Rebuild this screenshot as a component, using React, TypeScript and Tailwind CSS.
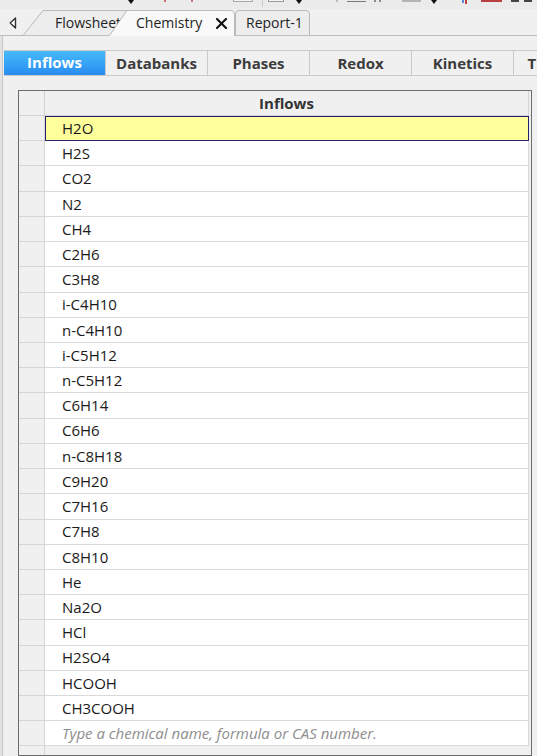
import React from "react";

const items = [
  "H2O","H2S","CO2","N2","CH4","C2H6","C3H8","i-C4H10","n-C4H10","i-C5H12","n-C5H12","C6H14","C6H6","n-C8H18","C9H20","C7H16","C7H8","C8H10","He","Na2O","HCl","H2SO4","HCOOH","CH3COOH",
];

const subTabs = ["Inflows", "Databanks", "Phases", "Redox", "Kinetics", "Transport"];

function Tri({ ml }: { ml: string }) {
  return (
    <svg className={`${ml} shrink-0`} width="6" height="4" viewBox="0 0 6 4">
      <polygon points="0,0 6,0 3,4" fill="#111" />
    </svg>
  );
}

export default function App() {
  return (
    <div
      className="w-[537px] h-[756px] overflow-hidden bg-[#f0f0f0] flex flex-col"
      style={{ fontFamily: "'Segoe UI', 'Open Sans', 'Noto Sans', sans-serif" }}
    >
      {/* toolbar remnants */}
      <div className="h-[9px] shrink-0 bg-[#ebebeb] flex items-start">
        <Tri ml="ml-[128px]" />
        <div className="ml-[30px] w-[2px] h-[2px] bg-[#d07070]" />
        <div className="ml-[25px] w-[2px] h-[2px] bg-[#d07070]" />
        <div className="ml-[40px] w-[20px] h-[2px] border border-t-0 border-[#a8a8a8] bg-[#f4f4f4]" />
        <div className="ml-[9px] w-px h-[7px] bg-[#cacaca]" />
        <div className="ml-[5px] w-[16px] h-[2px] border border-t-0 border-[#9a9a9a] bg-[#f4f4f4]" />
        <Tri ml="ml-[12px]" />
        <div className="ml-[34px] w-[2px] h-[2px] bg-[#bdbdbd]" />
        <div className="ml-[9px] w-[19px] h-px mt-px bg-[#7a7a7a]" />
        <div className="ml-[8px] w-[2px] h-[2px] bg-[#8a8a8a]" />
        <div className="ml-[3px] w-[2px] h-[2px] bg-[#8a8a8a]" />
        <div className="ml-[21px] w-[19px] h-[2px] bg-[#b4b4b4]" />
        <Tri ml="ml-[10px]" />
        <div className="ml-[25px] w-[2px] h-[3px] bg-[#5a85d8]" />
        <div className="ml-px w-[2px] h-[4px] bg-[#c04040]" />
        <div className="ml-[14px] w-[21px] h-[2px] bg-[#b84040]" />
        <div className="ml-[9px] w-[8px] h-[2px] bg-[#444]" />
        <div className="ml-[5px] w-[8px] h-[2px] bg-[#444]" />
      </div>

      {/* document tabs */}
      <div className="h-[27px] shrink-0 flex items-end border-b border-[#bdbdbd] bg-[#f0f0f0]">
        <div className="w-[23px] h-[26px] flex items-center justify-center pl-[3px] pt-px">
          <svg width="8" height="12" viewBox="0 0 8 12">
            <polygon points="6.5,1 1.2,6 6.5,11" fill="#fff" stroke="#333" strokeWidth="1.4" strokeLinejoin="round" />
          </svg>
        </div>
        <div className="relative w-[105px] h-[25px] -mr-[19px] shrink-0">
          <svg className="absolute inset-0" width="105" height="25" viewBox="0 0 105 25">
            <path d="M0.5,25 L20,0.5 L104.5,0.5 L104.5,25" fill="#ededed" stroke="#b9b9b9" />
          </svg>
          <div className="relative pl-[32px] pt-[4px] text-[14px] text-[#1e1e1e] leading-[18px]">Flowsheet</div>
        </div>
        <div className="relative z-10 w-[126px] h-[26px] -mb-px shrink-0">
          <svg className="absolute inset-0" width="126" height="26" viewBox="0 0 126 26">
            <path d="M0,26 L0.5,25.5 L18,0.5 L122,0.5 Q125.5,0.5 125.5,4 L125.5,26" fill="#f9f9f9" stroke="#b9b9b9" />
          </svg>
          <div className="relative flex items-center pl-[27px] pt-[4px] text-[14px] text-[#1e1e1e] leading-[18px]">
            <span>Chemistry</span>
            <svg className="ml-[14px] mt-px" width="11" height="11" viewBox="0 0 11 11">
              <path d="M1,1 L10,10 M10,1 L1,10" stroke="#111" strokeWidth="2.1" strokeLinecap="square" />
            </svg>
          </div>
        </div>
        <div className="relative w-[75px] h-[25px] shrink-0">
          <svg className="absolute inset-0" width="75" height="25" viewBox="0 0 75 25">
            <path d="M0.5,25 L0.5,4 Q0.5,0.5 4,0.5 L71,0.5 Q74.5,0.5 74.5,4 L74.5,25" fill="#ededed" stroke="#b9b9b9" />
          </svg>
          <div className="relative pl-[11px] pt-[4px] text-[14px] text-[#1e1e1e] leading-[18px]">Report-1</div>
        </div>
      </div>

      {/* panel */}
      <div className="flex-1 flex bg-[#e2e2e2] pl-[2px] min-h-0">
        <div className="flex-1 flex flex-col border-l border-[#c6c6c6] bg-[#f0f0f0] min-h-0 overflow-hidden">
          <div className="mt-[14px] ml-[1px] h-[26px] shrink-0 flex border-t border-b border-[#c9c9c9] overflow-hidden">
            {subTabs.map((t, i) => (
              <div
                key={t}
                className={
                  i === 0
                    ? "w-[102px] shrink-0 flex items-center justify-center border-r border-[#c9c9c9] bg-gradient-to-b from-[#47bcfb] to-[#2a8cf0] text-white font-bold text-[15px] -mt-px h-[25px]"
                    : "w-[102px] shrink-0 flex items-center justify-center border-r border-[#c9c9c9] text-[#3c3c3c] font-bold text-[15px]"
                }
              >
                {t}
              </div>
            ))}
          </div>

          {/* grid */}
          <div className="mt-[14px] ml-[15px] w-[514px] flex-1 border border-[#6d6d6d] flex flex-col bg-[#f0f0f0] overflow-hidden">
            <div className="h-[25px] shrink-0 flex border-b border-[#d2d2d2]">
              <div className="w-[26px] shrink-0 border-r border-[#d2d2d2]" />
              <div className="w-[484px] shrink-0 flex items-center justify-center font-bold text-[15px] text-[#333] border-r border-[#d2d2d2]">
                Inflows
              </div>
            </div>
            {items.map((it, i) => (
              <div key={it} className="h-[25.23px] shrink-0 flex">
                <div className="w-[26px] shrink-0 border-r border-b border-[#d6d6d6]" />
                {i === 0 ? (
                  <div className="w-[484px] shrink-0 flex items-center pl-[16px] bg-[#ffff9c] border border-[#23236e] text-[15px] text-[#1a1a1a]">
                    {it}
                  </div>
                ) : (
                  <div className="w-[484px] shrink-0 flex items-center pl-[17px] bg-white border-b border-r border-[#d9d9d9] text-[15px] text-[#1a1a1a]">
                    {it}
                  </div>
                )}
              </div>
            ))}
            <div className="h-[25.23px] shrink-0 flex">
              <div className="w-[26px] shrink-0 border-r border-b border-[#d6d6d6]" />
              <div className="w-[484px] shrink-0 flex items-center pl-[17px] bg-white border-b border-r border-[#d9d9d9] text-[15px] italic text-[#8d8d8d]">
                Type a chemical name, formula or CAS number.
              </div>
            </div>
            <div className="flex-1 flex">
              <div className="w-[26px] shrink-0 border-r border-[#d6d6d6]" />
            </div>
          </div>
        </div>
      </div>
    </div>
  );
}
